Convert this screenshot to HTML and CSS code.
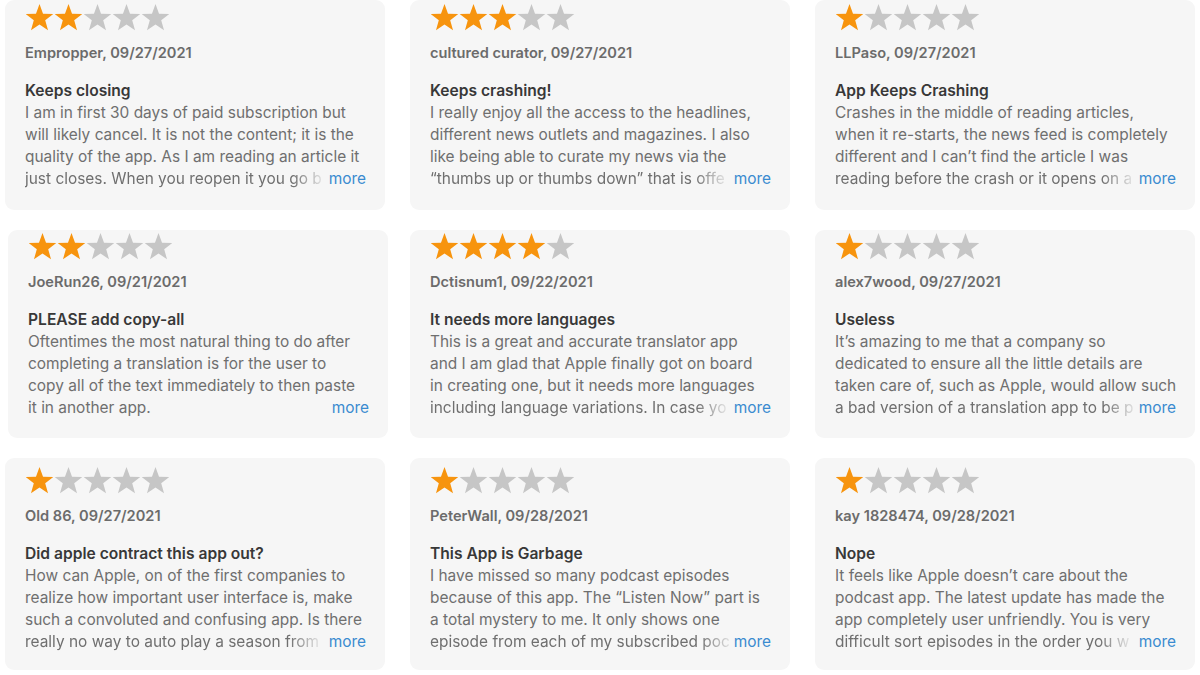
FILE: index.html
```html
<!DOCTYPE html>
<html lang="en">
<head>
<meta charset="utf-8">
<title>Reviews</title>
<link rel="stylesheet" href="styles.css">
</head>
<body>
<svg class="defs" width="0" height="0" aria-hidden="true">
  <defs>
    <polygon id="star" points="14.5,0 18.03,9.65 28.29,10.02 20.21,16.35 23.02,26.23 14.5,20.5 5.98,26.23 8.79,16.35 0.71,10.02 10.97,9.65"/>
  </defs>
</svg>
<main class="grid">
  <article class="card r1">
    <svg class="stars" viewBox="0 0 145 27" width="145" height="27"><use href="#star" x="0" class="on"/><use href="#star" x="29" class="on"/><use href="#star" x="58"/><use href="#star" x="87"/><use href="#star" x="116"/></svg>
    <div class="author">Empropper, 09/27/2021</div>
    <h3 class="title">Keeps closing</h3>
    <div class="body">
      <div class="line">I am in first 30 days of paid subscription but</div>
      <div class="line">will likely cancel. It is not the content; it is the</div>
      <div class="line">quality of the app. As I am reading an article it</div>
      <div class="line last"><span class="cut">just closes. When you reopen it you go b</span><span class="more">more</span></div>
    </div>
  </article>
  <article class="card r1">
    <svg class="stars" viewBox="0 0 145 27" width="145" height="27"><use href="#star" x="0" class="on"/><use href="#star" x="29" class="on"/><use href="#star" x="58" class="on"/><use href="#star" x="87"/><use href="#star" x="116"/></svg>
    <div class="author">cultured curator, 09/27/2021</div>
    <h3 class="title">Keeps crashing!</h3>
    <div class="body">
      <div class="line">I really enjoy all the access to the headlines,</div>
      <div class="line">different news outlets and magazines. I also</div>
      <div class="line">like being able to curate my news via the</div>
      <div class="line last"><span class="cut">“thumbs up or thumbs down” that is offe</span><span class="more">more</span></div>
    </div>
  </article>
  <article class="card r1">
    <svg class="stars" viewBox="0 0 145 27" width="145" height="27"><use href="#star" x="0" class="on"/><use href="#star" x="29"/><use href="#star" x="58"/><use href="#star" x="87"/><use href="#star" x="116"/></svg>
    <div class="author">LLPaso, 09/27/2021</div>
    <h3 class="title">App Keeps Crashing</h3>
    <div class="body">
      <div class="line">Crashes in the middle of reading articles,</div>
      <div class="line">when it re-starts, the news feed is completely</div>
      <div class="line">different and I can’t find the article I was</div>
      <div class="line last"><span class="cut">reading before the crash or it opens on a</span><span class="more">more</span></div>
    </div>
  </article>

  <article class="card r2 shift">
    <svg class="stars" viewBox="0 0 145 27" width="145" height="27"><use href="#star" x="0" class="on"/><use href="#star" x="29" class="on"/><use href="#star" x="58"/><use href="#star" x="87"/><use href="#star" x="116"/></svg>
    <div class="author">JoeRun26, 09/21/2021</div>
    <h3 class="title">PLEASE add copy-all</h3>
    <div class="body">
      <div class="line">Oftentimes the most natural thing to do after</div>
      <div class="line">completing a translation is for the user to</div>
      <div class="line">copy all of the text immediately to then paste</div>
      <div class="line last"><span class="cut full">it in another app.</span><span class="more">more</span></div>
    </div>
  </article>
  <article class="card r2">
    <svg class="stars" viewBox="0 0 145 27" width="145" height="27"><use href="#star" x="0" class="on"/><use href="#star" x="29" class="on"/><use href="#star" x="58" class="on"/><use href="#star" x="87" class="on"/><use href="#star" x="116"/></svg>
    <div class="author">Dctisnum1, 09/22/2021</div>
    <h3 class="title">It needs more languages</h3>
    <div class="body">
      <div class="line">This is a great and accurate translator app</div>
      <div class="line">and I am glad that Apple finally got on board</div>
      <div class="line">in creating one, but it needs more languages</div>
      <div class="line last"><span class="cut">including language variations. In case yo</span><span class="more">more</span></div>
    </div>
  </article>
  <article class="card r2">
    <svg class="stars" viewBox="0 0 145 27" width="145" height="27"><use href="#star" x="0" class="on"/><use href="#star" x="29"/><use href="#star" x="58"/><use href="#star" x="87"/><use href="#star" x="116"/></svg>
    <div class="author">alex7wood, 09/27/2021</div>
    <h3 class="title">Useless</h3>
    <div class="body">
      <div class="line">It’s amazing to me that a company so</div>
      <div class="line">dedicated to ensure all the little details are</div>
      <div class="line">taken care of, such as Apple, would allow such</div>
      <div class="line last"><span class="cut">a bad version of a translation app to be p</span><span class="more">more</span></div>
    </div>
  </article>

  <article class="card r3">
    <svg class="stars" viewBox="0 0 145 27" width="145" height="27"><use href="#star" x="0" class="on"/><use href="#star" x="29"/><use href="#star" x="58"/><use href="#star" x="87"/><use href="#star" x="116"/></svg>
    <div class="author">Old 86, 09/27/2021</div>
    <h3 class="title">Did apple contract this app out?</h3>
    <div class="body">
      <div class="line">How can Apple, on of the first companies to</div>
      <div class="line">realize how important user interface is, make</div>
      <div class="line">such a convoluted and confusing app. Is there</div>
      <div class="line last"><span class="cut">really no way to auto play a season from</span><span class="more">more</span></div>
    </div>
  </article>
  <article class="card r3">
    <svg class="stars" viewBox="0 0 145 27" width="145" height="27"><use href="#star" x="0" class="on"/><use href="#star" x="29"/><use href="#star" x="58"/><use href="#star" x="87"/><use href="#star" x="116"/></svg>
    <div class="author">PeterWall, 09/28/2021</div>
    <h3 class="title">This App is Garbage</h3>
    <div class="body">
      <div class="line">I have missed so many podcast episodes</div>
      <div class="line">because of this app. The “Listen Now” part is</div>
      <div class="line">a total mystery to me. It only shows one</div>
      <div class="line last"><span class="cut">episode from each of my subscribed poc</span><span class="more">more</span></div>
    </div>
  </article>
  <article class="card r3">
    <svg class="stars" viewBox="0 0 145 27" width="145" height="27"><use href="#star" x="0" class="on"/><use href="#star" x="29"/><use href="#star" x="58"/><use href="#star" x="87"/><use href="#star" x="116"/></svg>
    <div class="author">kay 1828474, 09/28/2021</div>
    <h3 class="title">Nope</h3>
    <div class="body">
      <div class="line">It feels like Apple doesn’t care about the</div>
      <div class="line">podcast app. The latest update has made the</div>
      <div class="line">app completely user unfriendly. You is very</div>
      <div class="line last"><span class="cut">difficult sort episodes in the order you w</span><span class="more">more</span></div>
    </div>
  </article>
</main>
</body>
</html>
```
FILE: styles.css
```css
html, body {
  margin: 0;
  padding: 0;
  background: #ffffff;
}
body {
  font-family: Inter, "Noto Sans", "Liberation Sans", sans-serif;
  width: 1200px;
  height: 675px;
  overflow: hidden;
}
.defs {
  position: absolute;
  width: 0;
  height: 0;
}
.grid {
  display: grid;
  grid-template-columns: repeat(3, 380px);
  grid-template-rows: 210px 208px 212px;
  column-gap: 25px;
  row-gap: 20px;
  padding-left: 5px;
}
.card {
  background: #f6f6f6;
  border-radius: 9px;
  padding: 4px 19px 0 20px;
  box-sizing: border-box;
  overflow: hidden;
}
.card.r2 { padding-top: 3px; }
.card.r3 { padding-top: 9px; }
.card.shift { margin-left: 3px; margin-right: -3px; }

.stars {
  display: block;
  width: 145px;
  height: 27px;
  fill: #c6c6c6;
}
.stars .on { fill: #f7940e; }

.author {
  margin-top: 12px;
  font-size: 14.6px;
  line-height: 20px;
  font-weight: 600;
  color: #6b6b6b;
}
.title {
  margin: 17px 0 0 0;
  font-size: 15.6px;
  line-height: 22px;
  font-weight: 600;
  color: #383838;
}
.body {
  font-size: 15.45px;
  line-height: 22px;
  color: #6f6f6f;
}
.line {
  white-space: nowrap;
}
.line.last {
  display: flex;
  align-items: baseline;
  justify-content: space-between;
}
.cut {
  flex: 0 1 auto;
  min-width: 0;
  overflow: hidden;
  white-space: nowrap;
  -webkit-mask-image: linear-gradient(to right, #000 calc(100% - 30px), rgba(0,0,0,0.15) 100%);
  mask-image: linear-gradient(to right, #000 calc(100% - 30px), rgba(0,0,0,0.15) 100%);
}
.cut.full {
  -webkit-mask-image: none;
  mask-image: none;
}
.more {
  flex: 0 0 auto;
  margin-left: 4px;
  color: #3a8bd0;
}
```
